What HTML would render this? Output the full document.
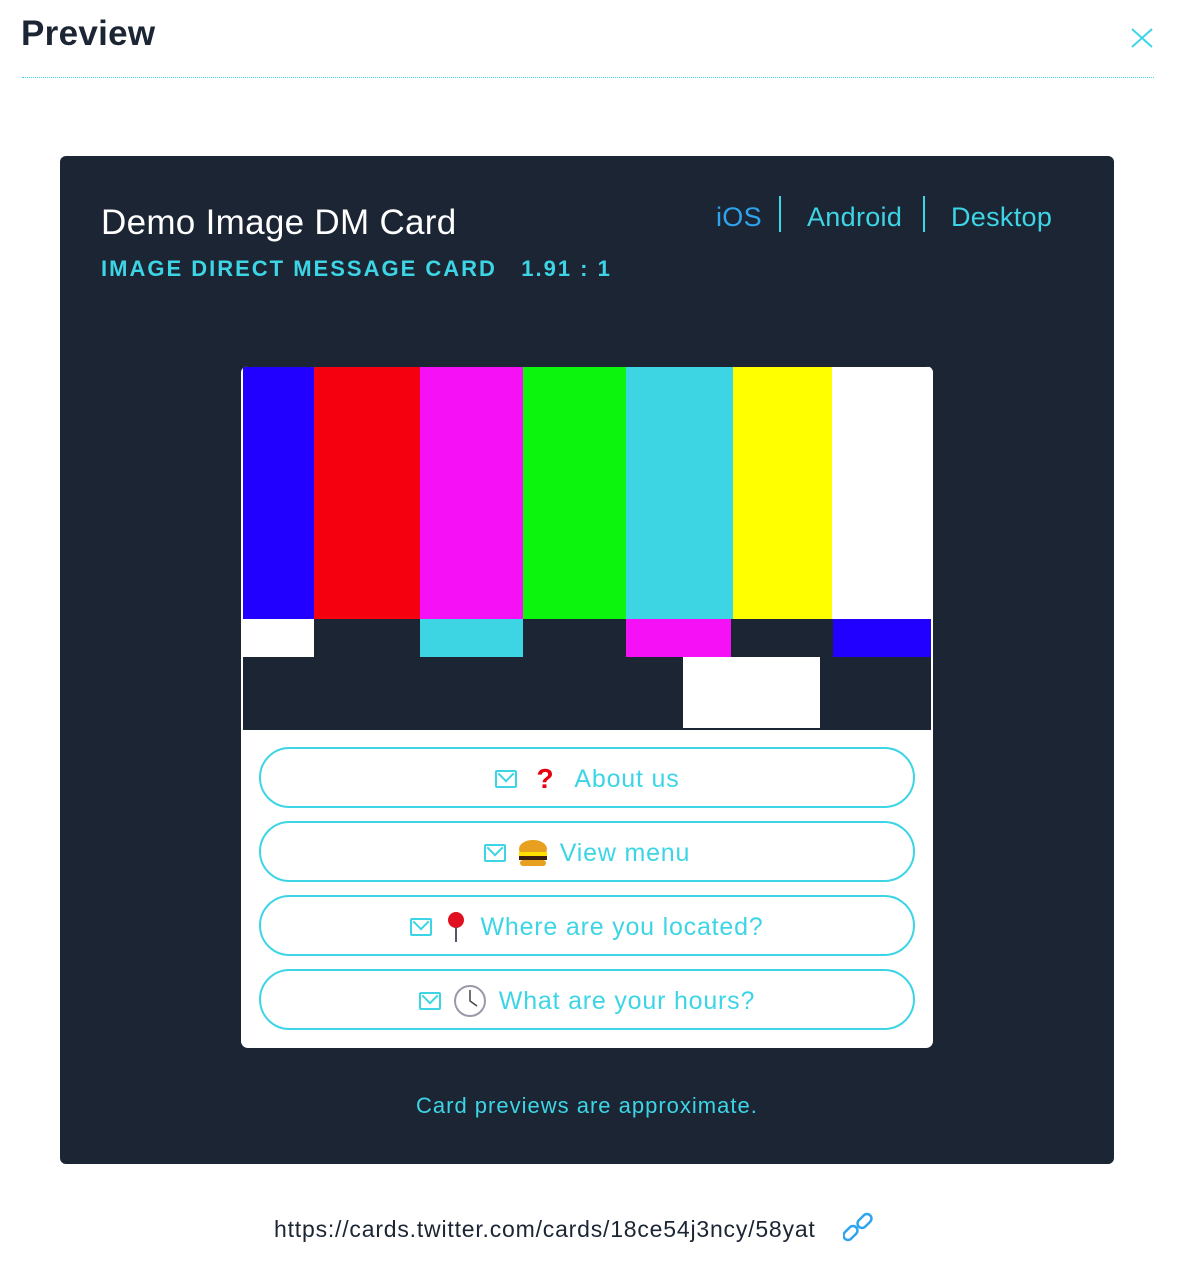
<!DOCTYPE html>
<html><head><meta charset="utf-8"><style>
*{margin:0;padding:0;box-sizing:border-box}
body{width:1182px;height:1266px;background:#fff;font-family:"Liberation Sans",sans-serif;position:relative;overflow:hidden}
.abs{position:absolute}
h1{position:absolute;left:21px;top:14px;font-size:35px;font-weight:bold;color:#1b2533;letter-spacing:0.3px}
.hr{position:absolute;left:22px;top:77px;width:1132px;border-top:1px dotted #3dd5e6}
.dark{position:absolute;left:60px;top:156px;width:1054px;height:1008px;background:#1b2533;border-radius:6px}
.title{position:absolute;left:101px;top:203px;font-size:35px;color:#fff;letter-spacing:0.3px}
.sub{position:absolute;left:101px;top:256px;font-size:22px;font-weight:bold;color:#3dd5e6;letter-spacing:2px}
.tab{position:absolute;top:202px;font-size:27px;color:#3dd5e6;letter-spacing:0.3px}
.sep{position:absolute;top:196px;width:2px;height:36px;background:#3dd5e6}
.card{position:absolute;left:241px;top:366px;width:692px;height:682px;background:#fff;border-radius:7px;overflow:hidden}
.btn{position:absolute;left:259px;width:656px;height:61px;border:2px solid #3dd5e6;border-radius:31px;color:#3dd5e6;font-size:25px;letter-spacing:0.8px;display:flex;align-items:center;justify-content:center;gap:12px;padding-top:3px}
.env{width:22px;height:18px;border:2px solid #3dd5e6;position:relative;border-radius:2px}
.env:after{content:"";position:absolute;left:3px;top:-4px;width:10px;height:10px;border-right:2px solid #3dd5e6;border-bottom:2px solid #3dd5e6;transform:rotate(45deg)}
</style></head><body>
<h1>Preview</h1>
<svg class="abs" style="left:1130px;top:27px" width="24" height="22"><path d="M2 2L22 20M22 2L2 20" stroke="#3dd5e6" stroke-width="2"/></svg>
<div class="hr"></div>
<div class="dark"></div>
<div class="title">Demo Image DM Card</div>
<div class="sub">IMAGE DIRECT MESSAGE CARD &nbsp; 1.91 : 1</div>
<div class="tab" style="left:716px;color:#2fa4ee">iOS</div>
<div class="sep" style="left:779px"></div>
<div class="tab" style="left:807px">Android</div>
<div class="sep" style="left:923px"></div>
<div class="tab" style="left:951px">Desktop</div>
<div class="card">
<svg width="692" height="364" style="position:absolute;left:0;top:0">
<rect x="0" y="0" width="692" height="364" fill="#1b2533"/>
<rect x="1" y="1" width="72" height="252" fill="#2200ff"/>
<rect x="73" y="1" width="106" height="252" fill="#f5000e"/>
<rect x="179" y="1" width="103" height="252" fill="#f510f5"/>
<rect x="282" y="1" width="103" height="252" fill="#0cf50c"/>
<rect x="385" y="1" width="107" height="252" fill="#3dd5e3"/>
<rect x="492" y="1" width="99" height="252" fill="#ffff00"/>
<rect x="591" y="1" width="101" height="252" fill="#fff"/>
<rect x="1" y="253" width="72" height="38" fill="#fff"/>
<rect x="179" y="253" width="103" height="38" fill="#3dd5e3"/>
<rect x="385" y="253" width="105" height="38" fill="#f510f5"/>
<rect x="592" y="253" width="98" height="38" fill="#2200ff"/>
<rect x="442" y="291" width="137" height="71" fill="#fff"/>
<rect x="0" y="0" width="2" height="364" fill="#fff"/>
<rect x="690" y="0" width="2" height="364" fill="#fff"/>
</svg>
</div>
<div class="btn" style="top:747px"><span class="env"></span><span style="color:#e8000e;font-weight:bold;font-size:28px;margin:0 8px">?</span><span>About us</span></div>
<div class="btn" style="top:821px"><span class="env"></span><svg width="30" height="30"><ellipse cx="15" cy="11" rx="14" ry="9" fill="#e8a020"/><rect x="1" y="14" width="28" height="4" fill="#ffe000"/><rect x="1" y="18" width="28" height="4" fill="#3a2010"/><rect x="2" y="22" width="26" height="6" rx="3" fill="#e8a020"/></svg><span>View menu</span></div>
<div class="btn" style="top:895px"><span class="env"></span><svg width="24" height="32"><circle cx="12" cy="9" r="8" fill="#e01020"/><line x1="12" y1="16" x2="12" y2="31" stroke="#556" stroke-width="2"/></svg><span>Where are you located?</span></div>
<div class="btn" style="top:969px"><span class="env"></span><svg width="34" height="34"><circle cx="17" cy="17" r="15" fill="#fff" stroke="#99a" stroke-width="2"/><path d="M17 6V17L24 22" stroke="#444" stroke-width="1.5" fill="none"/></svg><span>What are your hours?</span></div>
<div class="abs" style="left:416px;top:1093px;font-size:22px;color:#3dd5e6;letter-spacing:1px">Card previews are approximate.</div>
<div class="abs" style="left:274px;top:1216px;font-size:23px;color:#1b2533;letter-spacing:0.8px">https://cards.twitter.com/cards/18ce54j3ncy/58yat</div>
<svg class="abs" style="left:843px;top:1212px" width="30" height="30" viewBox="0 0 30 30"><g fill="none" stroke="#2fa4ee" stroke-width="2.5"><rect x="3" y="13" width="9" height="16" rx="4.5" transform="rotate(45 7.5 21)"/><rect x="17" y="1" width="9" height="16" rx="4.5" transform="rotate(45 21.5 9)"/></g></svg>
</body></html>
